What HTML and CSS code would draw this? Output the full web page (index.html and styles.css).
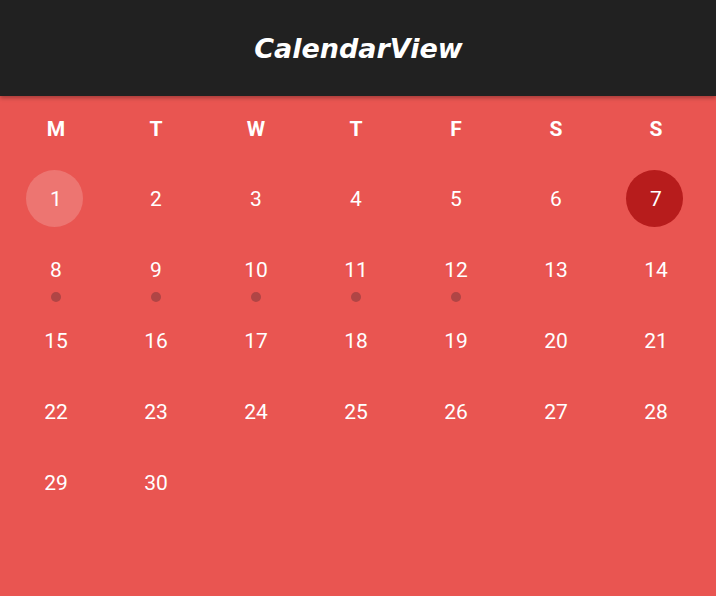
FILE: index.html
```html
<!DOCTYPE html>
<html lang="en">
<head>
<meta charset="utf-8">
<title>CalendarView</title>
<link rel="stylesheet" href="styles.css">
</head>
<body>
  <header class="toolbar">
    <h1 class="toolbar-title">CalendarView</h1>
  </header>
  <main class="calendar">
    <div class="weekdays">
      <span>M</span><span>T</span><span>W</span><span>T</span><span>F</span><span>S</span><span>S</span>
    </div>
    <div class="days">
      <div class="day"><span class="num today">1</span></div>
      <div class="day"><span class="num">2</span></div>
      <div class="day"><span class="num">3</span></div>
      <div class="day"><span class="num">4</span></div>
      <div class="day"><span class="num">5</span></div>
      <div class="day"><span class="num">6</span></div>
      <div class="day"><span class="num selected">7</span></div>

      <div class="day event"><span class="num">8</span></div>
      <div class="day event"><span class="num">9</span></div>
      <div class="day event"><span class="num">10</span></div>
      <div class="day event"><span class="num">11</span></div>
      <div class="day event"><span class="num">12</span></div>
      <div class="day"><span class="num">13</span></div>
      <div class="day"><span class="num">14</span></div>

      <div class="day"><span class="num">15</span></div>
      <div class="day"><span class="num">16</span></div>
      <div class="day"><span class="num">17</span></div>
      <div class="day"><span class="num">18</span></div>
      <div class="day"><span class="num">19</span></div>
      <div class="day"><span class="num">20</span></div>
      <div class="day"><span class="num">21</span></div>

      <div class="day"><span class="num">22</span></div>
      <div class="day"><span class="num">23</span></div>
      <div class="day"><span class="num">24</span></div>
      <div class="day"><span class="num">25</span></div>
      <div class="day"><span class="num">26</span></div>
      <div class="day"><span class="num">27</span></div>
      <div class="day"><span class="num">28</span></div>

      <div class="day"><span class="num">29</span></div>
      <div class="day"><span class="num">30</span></div>
    </div>
  </main>
</body>
</html>
```

FILE: styles.css
```css
html, body {
  margin: 0;
  padding: 0;
  height: 100%;
}

body {
  background: #e95551;
  font-family: Roboto, "Noto Sans", sans-serif;
  color: #ffffff;
  overflow: hidden;
}

.toolbar {
  position: relative;
  z-index: 1;
  height: 96px;
  background: #212121;
  display: flex;
  align-items: center;
  justify-content: center;
  box-shadow: 0 2px 4px rgba(0, 0, 0, 0.3);
}

.toolbar-title {
  margin: 0;
  padding-left: 1px;
  font-family: "DejaVu Sans", sans-serif;
  font-weight: bold;
  font-style: italic;
  font-size: 27px;
  color: #ffffff;
}

.calendar {
  padding: 0 10px 0 6px;
}

.weekdays,
.days {
  display: grid;
  grid-template-columns: repeat(7, 100px);
}

.weekdays {
  height: 64px;
  align-items: center;
}

.weekdays span {
  text-align: center;
  font-weight: 700;
  font-size: 21px;
  padding-top: 1px;
}

.days {
  margin-top: 3px;
  grid-auto-rows: 71px;
}

.day {
  position: relative;
  display: flex;
  align-items: center;
  justify-content: center;
}

/* circle sits 2px left of the cell centre, label stays centred */
.num {
  box-sizing: border-box;
  width: 57px;
  height: 57px;
  margin-left: -4px;
  padding-left: 4px;
  border-radius: 50%;
  display: flex;
  align-items: center;
  justify-content: center;
  font-size: 21px;
}

.num.today {
  background: rgba(255, 255, 255, 0.19);
}

.num.selected {
  background: #b71c1c;
}

.day.event::after {
  content: "";
  position: absolute;
  left: 50%;
  top: 58px;
  width: 10px;
  height: 10px;
  margin-left: -5px;
  border-radius: 50%;
  background: #b04545;
}
```
